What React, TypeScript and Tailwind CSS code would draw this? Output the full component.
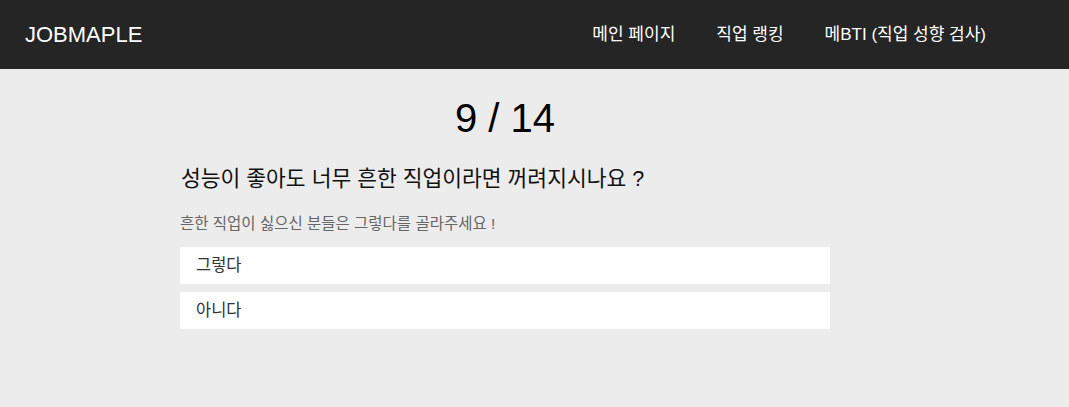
import React from "react";

const font = { fontFamily: '"Liberation Sans", "Noto Sans CJK KR", Arial, sans-serif' };

export default function App() {
  return (
    <div className="min-h-[407px] bg-[#ececec]" style={font}>
      <header className="h-[69px] bg-[#252525] flex items-center justify-between pl-[25px] pr-[83px]">
        <div className="text-[22px] text-white leading-none">JOBMAPLE</div>
        <nav className="flex items-center gap-[41px] text-[17px] text-white">
          <span>메인 페이지</span>
          <span>직업 랭킹</span>
          <span>메BTI (직업 성향 검사)</span>
        </nav>
      </header>
      <main className="w-[650px] ml-[180px]">
        <div className="pt-[26px] text-center text-[40px] leading-[46px] text-black">9 / 14</div>
        <div className="mt-[26px] text-[21.5px] leading-[25px] text-[#111] pl-[1px]">
          성능이 좋아도 너무 흔한 직업이라면 꺼려지시나요 ?
        </div>
        <div className="mt-[23px] text-[15.5px] leading-[18px] text-[#666]">
          흔한 직업이 싫으신 분들은 그렇다를 골라주세요 !
        </div>
        <div className="mt-[14px] flex flex-col gap-[8px]">
          <div className="h-[37px] bg-white flex items-center pl-[16px] text-[16.5px] text-[#333]">그렇다</div>
          <div className="h-[37px] bg-white flex items-center pl-[16px] text-[16.5px] text-[#333]">아니다</div>
        </div>
      </main>
    </div>
  );
}
